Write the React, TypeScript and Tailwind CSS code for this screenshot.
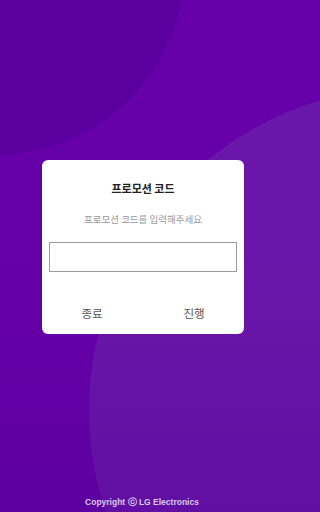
export default function App() {
  return (
    <div
      className="relative h-[512px] w-full overflow-hidden bg-[#6600a8]"
      style={{ fontFamily: '"Noto Sans CJK KR", "Noto Sans", sans-serif' }}
    >
      {/* background blobs */}
      <div className="pointer-events-none absolute left-[-195px] top-[-225px] h-[380px] w-[380px] rounded-full bg-[#5a009e]" />
      <div className="pointer-events-none absolute left-[89px] top-[87px] h-[646px] w-[646px] rounded-full bg-[#6a16aa]" />
      <div className="pointer-events-none absolute inset-0 bg-gradient-to-b from-transparent via-transparent to-[#4a0090]/30" />

      <div className="relative flex h-full w-[282px] flex-col">
        <div className="flex flex-1 flex-col items-center pl-[4px] pt-[160px]">
          <div className="flex w-[202px] flex-col rounded-md bg-white px-[7px] pt-[21px]">
            <div className="text-center text-[11px] font-bold leading-[14px] text-[#222]">
              프로모션 코드
            </div>
            <div className="mt-[18px] text-center text-[9.5px] leading-[12px] text-[#9a9a9a]">
              프로모션 코드를 입력해주세요
            </div>
            <input
              type="text"
              className="mt-[17px] h-[30px] w-full border border-[#9a9a9a] bg-white px-2 text-[11px] outline-none"
            />
            <div className="mt-[32px] grid h-[20px] grid-cols-2 items-center gap-[16px] text-[11.5px] text-[#555]">
              <button className="text-center">종료</button>
              <button className="text-center">진행</button>
            </div>
            <div className="h-[10px]" />
          </div>
        </div>

        <div
          className="pb-[4px] pl-[2px] text-center text-[8.5px] font-bold leading-[12px] text-[#d8c8ec]"
          style={{ fontFamily: '"Liberation Sans", Arial, sans-serif' }}
        >
          Copyright ⓒ LG Electronics
        </div>
      </div>
    </div>
  )
}
